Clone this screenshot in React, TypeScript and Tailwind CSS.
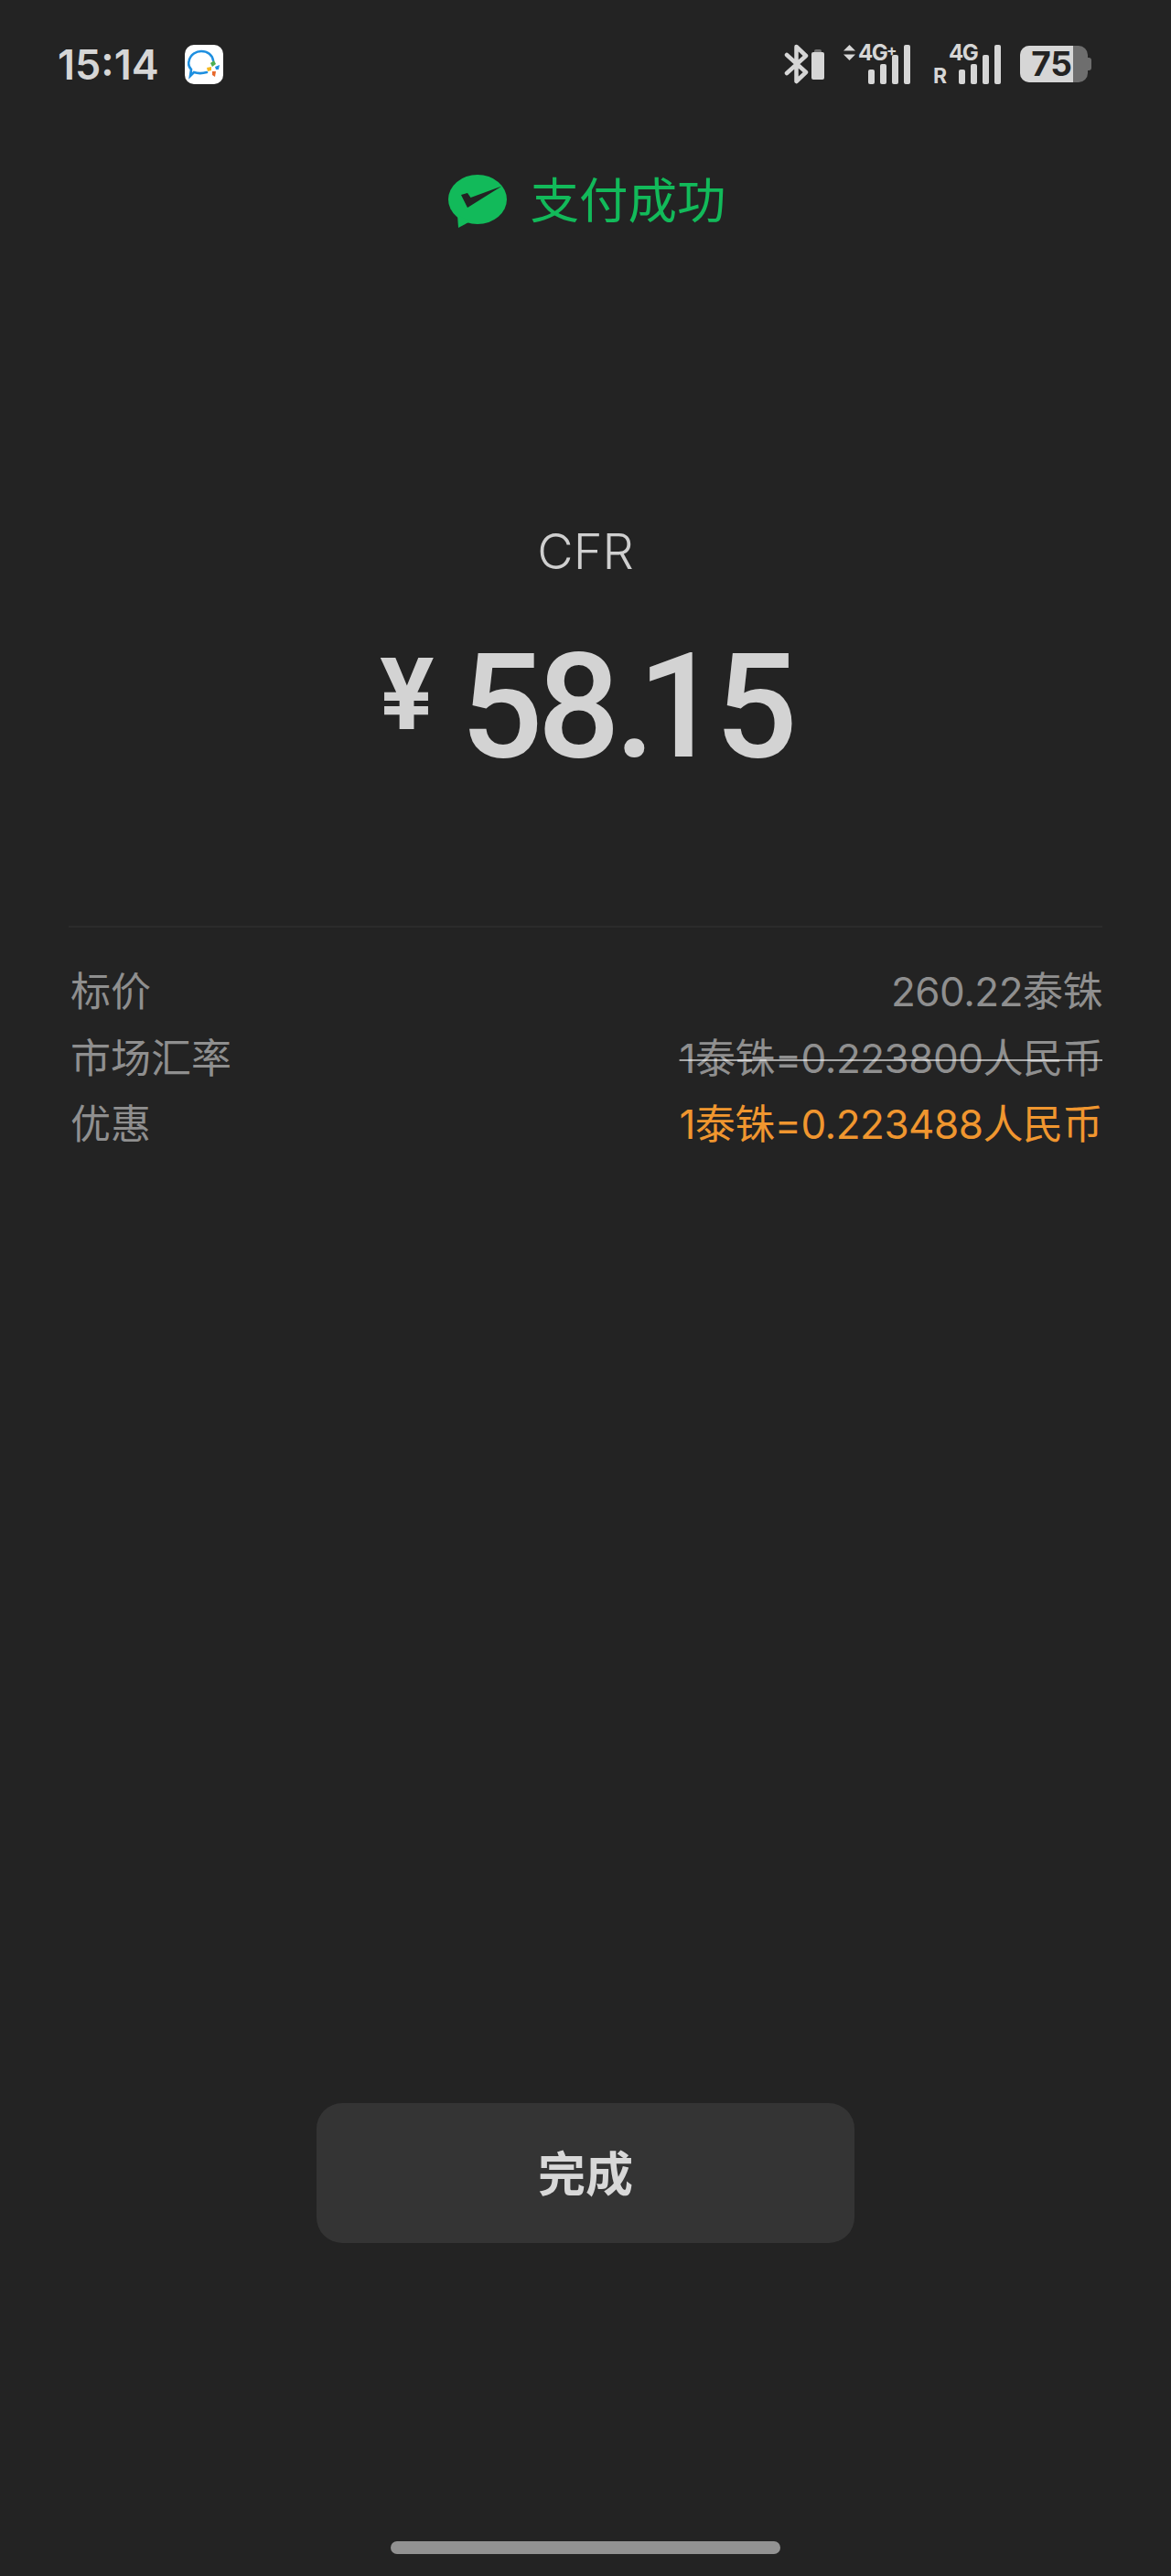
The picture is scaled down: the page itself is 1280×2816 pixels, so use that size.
// App.tsx
const fontStack = 'font-["Inter","Noto_Sans_CJK_SC",sans-serif]'

function WeChatPayIcon() {
    return (
        <svg width="64" height="58" viewBox="0 0 64 58">
            <ellipse cx="32" cy="27" rx="32" ry="27" fill="#12ba5a" />
            <path d="M10 44 L11 58 L24 51 Z" fill="#12ba5a" />
            <path d="M14 22 L21 20 L24.5 25 L58.5 12.5 L21 36 Z" fill="#232323" />
        </svg>
    )
}

function AppBadge() {
    return (
        <div className="flex h-[43px] w-[42px] items-center justify-center rounded-[10px] bg-white">
            <svg width="36" height="34" viewBox="0 0 36 34">
                <path
                    d="M21 26 C14 28 10 27 7 26 L3 30 L4 23 C1 20 1 16 1.500 14 C3 6 10 3 15 3 C22 3 27 7 28 13"
                    fill="none"
                    stroke="#1d8fe0"
                    strokeWidth="2.600"
                    strokeLinecap="round"
                />
                <path d="M25 16 L29 13 L31 17 L27 20 Z" fill="#4caf50" />
                <path d="M30 20 L35 18 L34 23 L31 23 Z" fill="#1d8fe0" />
                <path d="M21 21 L26 20 L26 24 L22 25 Z" fill="#f5b81f" />
                <path d="M27 25 L31 25 L30 31 L27 29 Z" fill="#e8692c" />
            </svg>
        </div>
    )
}

function BluetoothIcon() {
    return (
        <div className="flex items-end gap-[2px]">
            <svg width="28" height="44" viewBox="0 0 28 44">
                <path
                    d="M3 12 L24 31 L13.500 41 V3 L24 13 L3 32"
                    fill="none"
                    stroke="#d6d6d6"
                    strokeWidth="4.500"
                    strokeLinejoin="round"
                    strokeLinecap="round"
                />
            </svg>
            <div className="mb-[5px] flex flex-col items-center">
                <div className="h-[3px] w-[8px] rounded-t-[2px] bg-[#6e6e6e]" />
                <div className="h-[30px] w-[14px] rounded-[2px] bg-[#d6d6d6]" />
            </div>
        </div>
    )
}

function SignalBars() {
    return (
        <div className="flex items-end gap-[6px]">
            <div className="h-[16px] w-[7px] rounded-[2px] bg-[#d6d6d6]" />
            <div className="h-[22px] w-[7px] rounded-[2px] bg-[#d6d6d6]" />
            <div className="h-[32px] w-[7px] rounded-[2px] bg-[#d6d6d6]" />
            <div className="h-[43px] w-[7px] rounded-[2px] bg-[#d6d6d6]" />
        </div>
    )
}

function Signal4GPlus() {
    return (
        <div className="relative flex h-[44px] w-[74px] items-end justify-end">
            <SignalBars />
            <svg className="absolute left-[1px] top-[1px]" width="13" height="17" viewBox="0 0 13 17">
                <path d="M6.500 0 L13 6.500 H0 Z M6.500 17 L13 10.500 H0 Z" fill="#d6d6d6" />
            </svg>
            <span className="absolute left-[17px] top-[-4px] text-[24px] font-bold leading-[28px] tracking-[-1.500px] text-[#d6d6d6]">
                4G
            </span>
            <span className="absolute left-[48px] top-[-5px] text-[17px] font-bold leading-[24px] text-[#d6d6d6]">+</span>
        </div>
    )
}

function SignalRoaming() {
    return (
        <div className="relative flex h-[44px] w-[74px] items-end justify-end">
            <SignalBars />
            <span className="absolute left-0 bottom-[-5px] text-[23px] font-bold leading-[28px] text-[#d6d6d6]">
                R
            </span>
            <span className="absolute left-[17px] top-[-4px] text-[24px] font-bold leading-[28px] tracking-[-1.500px] text-[#d6d6d6]">
                4G
            </span>
        </div>
    )
}

function Battery() {
    return (
        <div className="flex items-center">
            <div className="flex h-[40px] w-[74px] rounded-[10px] bg-[#6e6e6e]">
                <div className="flex w-[58px] items-center justify-end rounded-l-[10px] bg-[#d6d6d6] pr-[1px] text-[37px] font-bold leading-[40px] text-[#232323]">
                    75
                </div>
            </div>
            <div className="h-[14px] w-[4px] rounded-r-[3px] bg-[#6e6e6e]" />
        </div>
    )
}

function StatusBar() {
    return (
        <div className="flex h-[140px] shrink-0 items-center justify-between pl-[63px] pr-[87px]">
            <div className="flex items-center gap-[28px]">
                <span className="w-[111px] text-[45px] font-semibold leading-none text-[#d6d6d6]">15:14</span>
                <AppBadge />
            </div>
            <div className="flex items-center">
                <BluetoothIcon />
                <div className="ml-[20px]">
                    <Signal4GPlus />
                </div>
                <div className="ml-[25px]">
                    <SignalRoaming />
                </div>
                <div className="ml-[21px]">
                    <Battery />
                </div>
            </div>
        </div>
    )
}

function DetailRow({ label, value, valueClass }: { label: string; value: string; valueClass: string }) {
    return (
        <div className="flex h-[72.500px] items-center justify-between text-[44px] leading-none text-[#8f8f8f]">
            <span>{label}</span>
            <span className={`tracking-[-0.500px] ${valueClass}`}>{value}</span>
        </div>
    )
}

export default function App() {
    return (
        <div className={`${fontStack} flex h-[2816px] w-[1280px] flex-col overflow-hidden bg-[#232323]`}>
            <StatusBar />

            <div className="flex h-[160px] shrink-0 items-center justify-center gap-[26px] pl-[3px]">
                <WeChatPayIcon />
                <span className="text-[53.500px] leading-none text-[#12ba5a]">支付成功</span>
            </div>

            <div className="mt-[273px] text-center text-[54px] font-[350] leading-[60px] text-[#cfcfcf]">CFR</div>

            <div className="mt-[59px] flex h-[160px] items-center justify-center gap-[28px] text-[#d3d3d3]">
                <span className="mb-[28px] text-[107px] font-bold leading-none">¥</span>
                {/* the point is tightened because the 1 sits close to it in the reference */}
                <span className='font-["Roboto",sans-serif] text-[159px] font-medium leading-none tracking-[-6px]'>
                    58<span className="tracking-[-19px]">.</span>15
                </span>
            </div>

            <div className="mx-[75px] mt-[160px] h-[2px] bg-[#2b2b2b]" />

            <div className="mt-[34px] pl-[77px] pr-[75px]">
                <DetailRow label="标价" value="260.22泰铢" valueClass="" />
                <DetailRow
                    label="市场汇率"
                    value="1泰铢=0.223800人民币"
                    valueClass="line-through decoration-[#ffffff99] decoration-2"
                />
                <DetailRow label="优惠" value="1泰铢=0.223488人民币" valueClass="text-[#f0962f]" />
            </div>

            <div className="mt-[1033px] flex justify-center">
                <button className="flex h-[153px] w-[588px] items-center justify-center rounded-[28px] bg-[#343434] pt-[6px] text-[52px] font-bold leading-none text-[#d8d8d8]">
                    完成
                </button>
            </div>

            <div className="mx-auto mt-[326px] h-[14px] w-[426px] rounded-full bg-[#929292]" />
        </div>
    )
}
